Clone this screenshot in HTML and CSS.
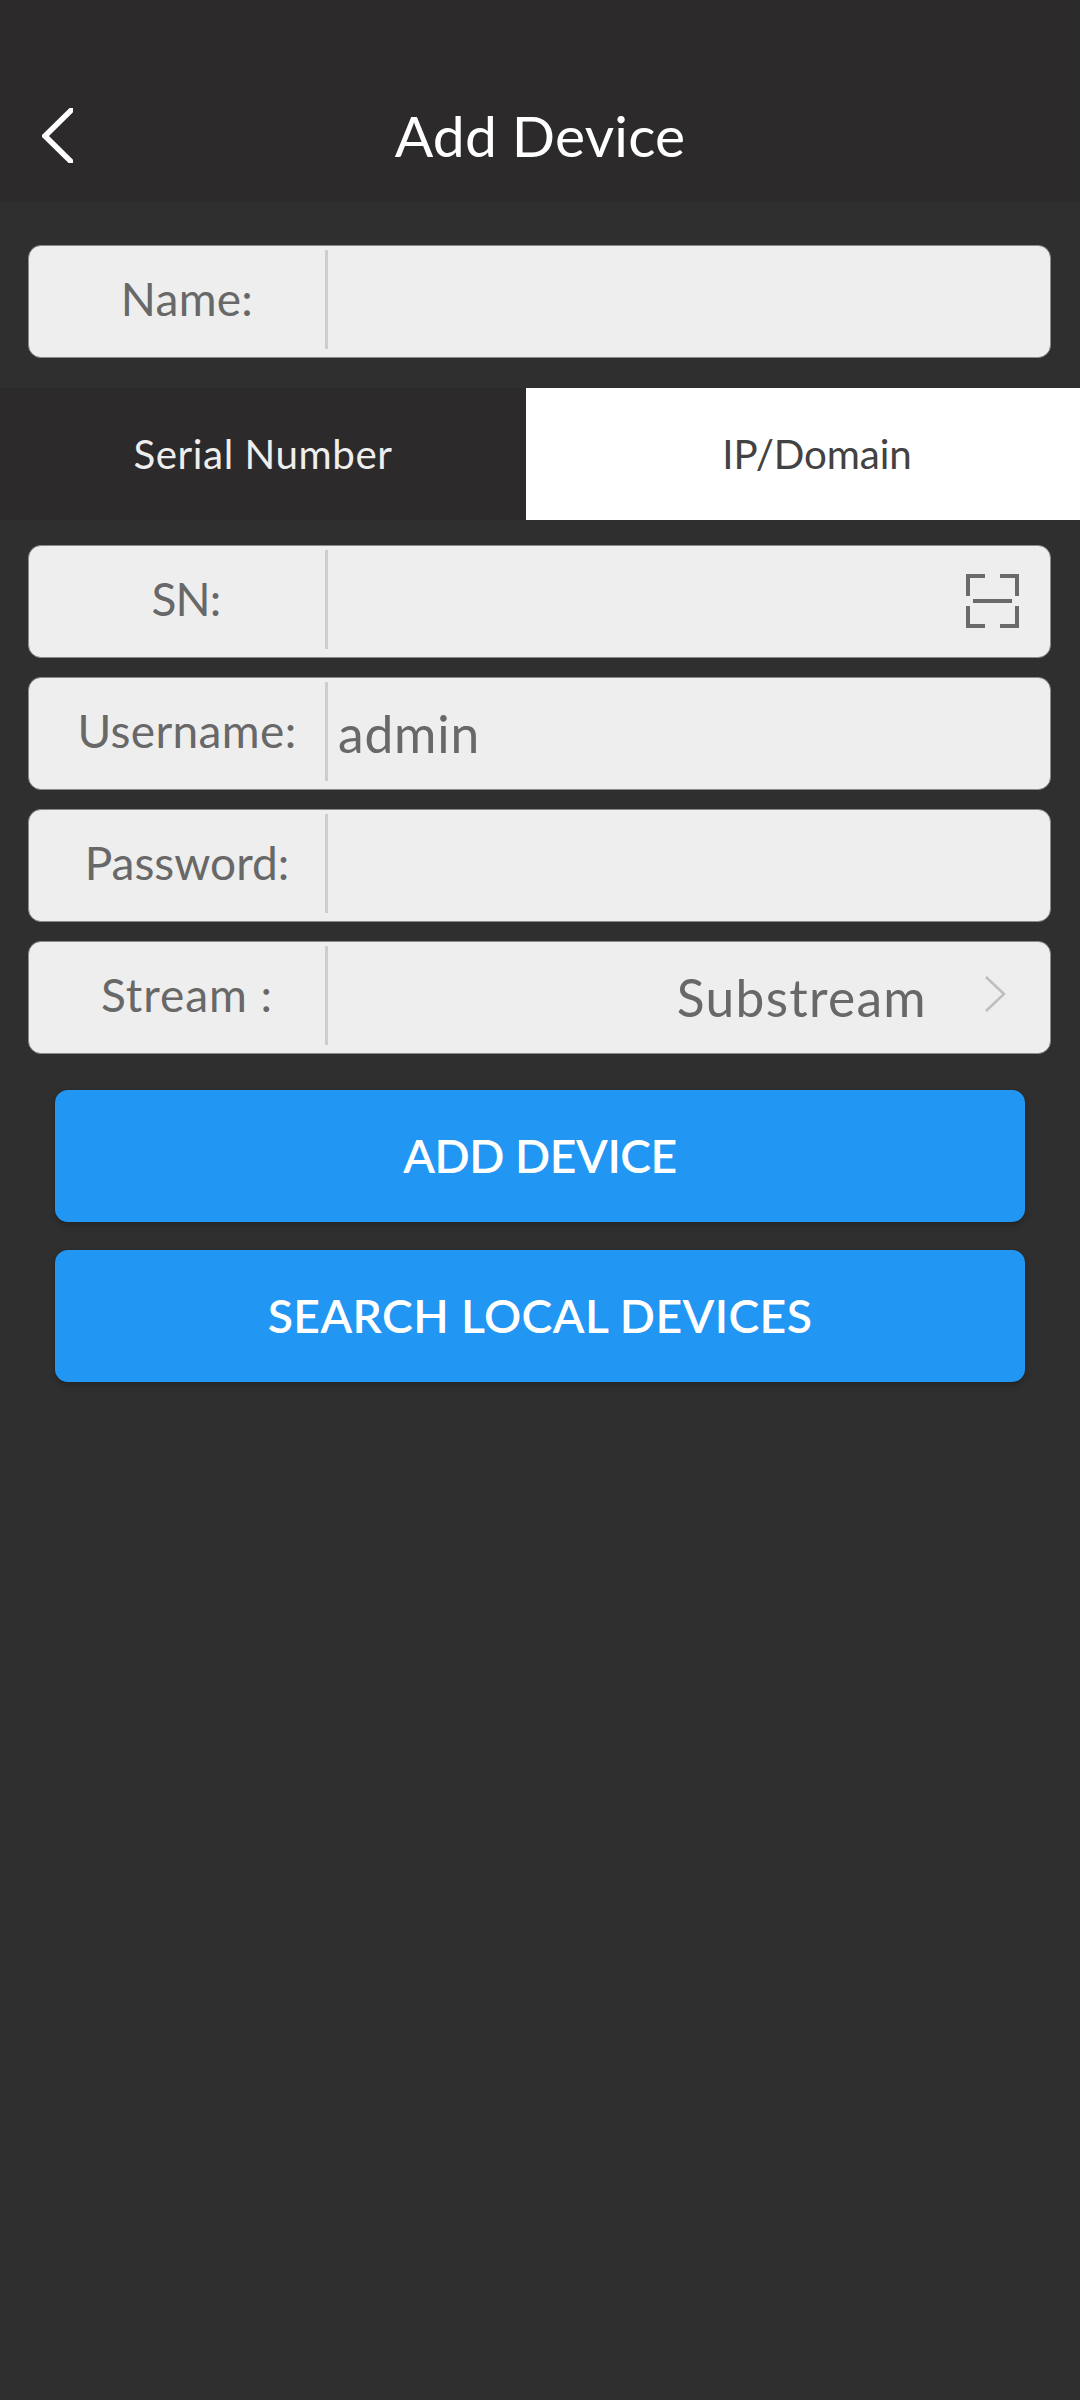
FILE: index.html
```html
<!DOCTYPE html>
<html lang="en">
<head>
<meta charset="utf-8">
<title>Add Device</title>
<link rel="stylesheet" href="styles.css">
</head>
<body>
<header class="header">
  <svg class="back" width="31" height="55" viewBox="0 0 31 55" aria-label="Back"><path d="M31.500 0L3 28L31.500 56" fill="none" stroke="#fff" stroke-width="5.500"/></svg>
  <h1 class="title">Add Device</h1>
</header>
<main>
  <div class="field field-name">
    <label class="label name">Name:</label>
    <span class="value"></span>
  </div>
  <nav class="tabs">
    <div class="tab tab-serial">Serial Number</div>
    <div class="tab tab-ip">IP/Domain</div>
  </nav>
  <section class="fields">
    <div class="field">
      <label class="label sn">SN:</label>
      <span class="value"></span>
      <svg class="scan" width="53" height="54" viewBox="0 0 53 54" aria-label="Scan code"><path d="M19 2H2V22M34 2H51V22M2 32V52H19M51 32V52H34M7 27H46" fill="none" stroke="#6a6a6a" stroke-width="4"/></svg>
    </div>
    <div class="field">
      <label class="label username">Username:</label>
      <span class="value">admin</span>
    </div>
    <div class="field">
      <label class="label password">Password:</label>
      <span class="value"></span>
    </div>
    <div class="field">
      <label class="label stream">Stream :</label>
      <span class="value value-end">Substream</span>
      <svg class="chevron" width="21" height="36" viewBox="0 0 21 36"><path d="M1 1L19 18L1 35" fill="none" stroke="#bebebe" stroke-width="2.500"/></svg>
    </div>
  </section>
  <div class="actions">
    <button class="button add">ADD DEVICE</button>
    <button class="button search">SEARCH LOCAL DEVICES</button>
  </div>
</main>
</body>
</html>
```
FILE: styles.css
```css
* { box-sizing: border-box; }

body {
  margin: 0;
  min-height: 2400px;
  background: #2f2f2f;
  font-family: Lato, "Open Sans", sans-serif;
}

.header {
  display: grid;
  grid-template-columns: 120px 1fr 120px;
  align-items: center;
  height: 202px;
  padding-top: 68px;
  background: #2c2a2b;
}

.back { margin: 1px 0 0 42px; }

.title {
  margin: 0;
  color: #fff;
  font-size: 57px;
  font-weight: 400;
  line-height: 70px;
  letter-spacing: 0.2px;
  text-align: center;
}

.field {
  display: flex;
  align-items: center;
  height: 113px;
  margin: 0 29px 0 28px;
  border: 1px solid #8b8b8b;
  border-radius: 13px;
  background: #eee;
  color: #686868;
}

.field-name { margin-top: 43px; }

.label {
  height: 99px;
  width: 299px;
  margin-bottom: 4px;
  padding-left: 20px;
  border-right: 3px solid #cdcdcd;
  font-size: 46px;
  line-height: 98px;
  text-align: center;
  white-space: nowrap;
}

.name { letter-spacing: 0.28px; }
.sn { padding-left: 18px; letter-spacing: -0.88px; }
.username { letter-spacing: 0.36px; }
.stream { letter-spacing: 0.96px; }

.value {
  flex: 1;
  padding: 0 0 1px 10px;
  font-size: 51.5px;
  line-height: 62px;
  letter-spacing: 0.83px;
}

.value-end {
  letter-spacing: 1.29px;
  text-align: right;
}

.scan { margin: 0 31px 2px 0; }

.chevron { margin: 0 44px 8px 58px; }

.tabs {
  display: grid;
  grid-template-columns: 526px 1fr;
  height: 132px;
  margin: 30px 0 25px;
}

.tab {
  font-size: 40.3px;
  line-height: 132px;
  text-align: center;
}

.tab-serial {
  background: #2c2a2b;
  color: #eee;
  letter-spacing: 0.56px;
}

.tab-ip {
  padding-left: 28px;
  background: #fff;
  color: #424242;
  letter-spacing: -0.11px;
}

.fields {
  display: grid;
  gap: 19px;
}

.actions {
  display: grid;
  gap: 28px;
  padding: 36px 55px 0;
}

.button {
  height: 132px;
  padding: 0 0 3px;
  border: 0;
  border-radius: 13px;
  background: #2196f3;
  box-shadow: 0 3px 6px rgba(0, 0, 0, 0.25);
  color: #fff;
  font-family: inherit;
  font-size: 46.3px;
  font-weight: 600;
}

.add { letter-spacing: -0.45px; }
.search { letter-spacing: 0.4px; }
```
